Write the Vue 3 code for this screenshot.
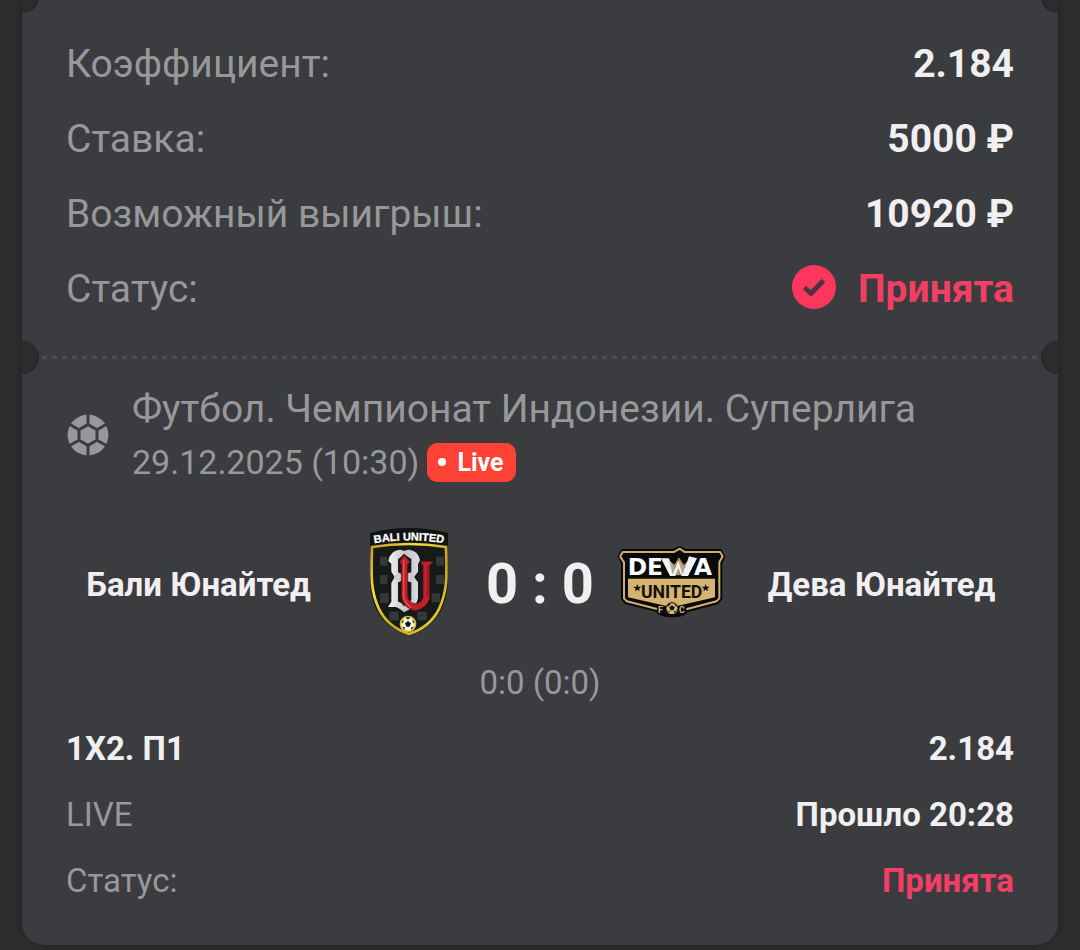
<script setup>
const summary = [
  { label: 'Коэффициент:', value: '2.184' },
  { label: 'Ставка:', value: '5000 ₽' },
  { label: 'Возможный выигрыш:', value: '10920 ₽' },
  { label: 'Статус:', value: 'Принята', accepted: true },
]
const details = [
  { label: '1X2. П1', value: '2.184', strong: true },
  { label: 'LIVE', value: 'Прошло 20:28' },
  { label: 'Статус:', value: 'Принята', accepted: true },
]
</script>

<template>
  <main class="page">
    <article class="ticket">
      <section class="summary">
        <span class="notch left top"></span>
        <span class="notch right top"></span>
        <dl class="rows">
          <div v-for="row in summary" :key="row.label" class="row">
            <dt>{{ row.label }}</dt>
            <dd :class="{ accepted: row.accepted }">
              <svg v-if="row.accepted" class="check" viewBox="0 0 44 44" aria-hidden="true">
                <circle cx="22" cy="22" r="22" fill="#ff375f" />
                <path d="M12.5 22.5 19 28.5 31.5 15.5" fill="none" stroke="#4b3440" stroke-width="4.8" />
              </svg>
              <span>{{ row.value }}</span>
            </dd>
          </div>
        </dl>
      </section>

      <div class="tear">
        <span class="notch left"></span>
        <span class="notch right"></span>
      </div>

      <section class="event">
        <header class="head">
          <svg class="ball" viewBox="-22 -22 44 44" aria-hidden="true">
            <circle r="20.4" fill="#98989a" />
            <g stroke="#3b3c3f" stroke-width="3" fill="none">
              <path d="M0-10.4 9-5.2V5.2L0 10.4-9 5.2V-5.2Z" />
              <path d="M0-10V-22M0 10V22M9-5.2 19.5-11.3M9 5.2 19.5 11.3M-9-5.2-19.5-11.3M-9 5.2-19.5 11.3" />
            </g>
          </svg>
          <div>
            <h1 class="league">Футбол. Чемпионат Индонезии. Суперлига</h1>
            <div class="when">
              <time datetime="2025-12-29T10:30">29.12.2025 (10:30)</time>
              <span class="live"><i class="dot"></i>Live</span>
            </div>
          </div>
        </header>

        <div class="match">
          <strong class="team">Бали Юнайтед</strong>
          <svg class="bali" viewBox="45 36 240 330" role="img" aria-label="Bali United">
            <defs>
              <linearGradient id="gold" x1="0" x2="1" y1="0" y2="1">
                <stop offset="0" stop-color="#c89a28" /><stop offset=".3" stop-color="#f5df3c" />
                <stop offset=".6" stop-color="#c9a027" /><stop offset="1" stop-color="#f4de35" />
              </linearGradient>
              <linearGradient id="silver" x1="0" x2="1">
                <stop offset="0" stop-color="#f2f2f4" /><stop offset=".55" stop-color="#c4c5c9" /><stop offset="1" stop-color="#dcdde0" />
              </linearGradient>
              <clipPath id="shield">
                <path d="M59 98Q165 74 271 98C275 190 275 230 252 278Q226 330 165 351Q104 330 78 278C55 230 55 190 59 98Z" />
              </clipPath>
            </defs>
            <path d="M48 54Q165 24 282 54L281 190C281 252 265 329 165 363C65 329 49 252 49 190Z" fill="#10130f" />
            <path d="M54 96Q165 78 276 96C279 190 279 230 256 280Q229 336 165 357Q101 336 74 280C51 230 51 190 54 96Z" fill="#171b18" stroke="url(#gold)" stroke-width="8" />
            <g clip-path="url(#shield)" fill="#34383a">
              <path d="M78 125H100V152H78ZM78 180H100V207H78ZM78 235H104V263H78ZM246 125H270V152H246ZM246 180H270V207H246ZM233 235H258V262H233ZM106 290H133V316H106ZM190 290H218V316H190Z" />
            </g>
            <path fill="url(#silver)" fill-rule="evenodd" d="M103 138Q108 108 136 104Q144 104 150 108Q158 104 166 104Q194 108 198 136L192 148V170L180 186 192 202V250Q190 274 150 292Q136 278 124 276H102L112 260V204L122 186 112 170V146ZM132 132V172Q143 175 150 186Q157 175 172 172V132Q162 126 150 116Q142 126 132 132ZM132 202V260Q144 262 150 274Q160 264 172 256V202Q157 199 150 188Q143 199 132 202Z" />
            <path d="M122 186Q136 172 150 186Q164 172 180 186M122 186Q136 200 150 186Q164 200 180 186" fill="none" stroke="#c9cacd" stroke-width="6" />
            <path fill="#c01f2b" stroke="#3a1216" stroke-width="2" d="M136 140 151 120 168 140 161 148V242Q164 264 184 266Q204 264 207 246V152L197 139H239L227 152V250Q220 278 185 288Q146 278 142 246V148Z" />
            <path d="M149 134V244Q153 266 172 278" fill="none" stroke="#e6525a" stroke-width="4" />
            <path d="M221 150V246" fill="none" stroke="#8c1720" stroke-width="4" />
            <g transform="translate(162 327)">
              <circle r="25" fill="#d7bf35" /><circle r="20" fill="#f5f4df" />
              <path d="M0-9 9-2 5 8H-5L-9-2ZM-7-20H7L0-13ZM14-14 20-3 14-5ZM18 8 9 18 10 10ZM-18 8-9 18-10 10ZM-14-14-20-3-14-5Z" fill="#171916" />
            </g>
            <path id="crest-arc" d="M54 86Q165 66 276 86" fill="none" />
            <text class="bali-name"><textPath href="#crest-arc" startOffset="50%" text-anchor="middle">BALI UNITED</textPath></text>
          </svg>
          <div class="score">0 : 0</div>
          <svg class="dewa" viewBox="36 48 327 216" role="img" aria-label="Dewa United FC">
            <path d="M38 78 51 57H202L224 48 244 57H348L361 78 352 101V208L340 222 248 247Q240 262 201 262Q161 261 153 245L60 222 48 208V101Z" fill="#080909" />
            <path d="M45 79 54 66H207L224 56 239 66H345L353 79 343 97V205L334 214 244 238M156 237 66 214 57 205V97L45 79" fill="none" stroke="#d3ad70" stroke-width="6" />
            <path d="M69 146H330V202L200 232 69 202Z" fill="#d6b372" />
            <path d="M196 136 196 94 208 104 222 82 236 104 248 94 250 136Z" fill="#b99152" />
            <g class="dewa-name"><text x="68" y="136">DE</text><text x="267" y="136">A</text></g>
            <path d="M168 85H191L209 119 220 92 239 117 252 79 276 85 249 138H230L220 115 211 138H195Z" fill="#f2f2f2" />
            <path d="M191 85 209 119 203 134ZM220 92 239 117 232 134Z" fill="#a9abae" />
            <text class="united-name" x="200" y="204" text-anchor="middle">UNITED</text>
            <path d="M97 162 100 170H109L102 176 104 184 97 179 90 184 92 176 85 170H94ZM302 162 305 170H314L307 176 309 184 302 179 295 184 297 176 290 170H299Z" fill="#11110e" />
            <path d="M157 228H245L239 251Q200 267 163 251Z" fill="#090a0a" />
            <g class="fc-name"><text x="159" y="250">F</text><text x="222" y="250">C</text></g>
            <circle cx="201" cy="236" r="18" fill="#d8b779" stroke="#080909" stroke-width="3" />
            <path d="M201 226 209 232 206 241H196L193 232ZM187 225 193 220 197 223 189 230ZM208 220 217 228 211 229ZM186 242 193 247 195 243ZM216 242 207 250 208 243Z" fill="#15140f" />
          </svg>
          <strong class="team">Дева Юнайтед</strong>
        </div>
        <p class="periods">0:0 (0:0)</p>

        <dl class="rows small">
          <div v-for="row in details" :key="row.label" class="row">
            <dt :class="{ strong: row.strong }">{{ row.label }}</dt>
            <dd :class="{ accepted: row.accepted }">{{ row.value }}</dd>
          </div>
        </dl>
      </section>
    </article>
  </main>
</template>

<style>
body {
  background: #2c2d2f;
}
</style>

<style scoped>
.page {
  padding: 0 22px 5px;
  font-family: Roboto, "Noto Sans", sans-serif;
  color: #98989a;
}
.ticket {
  background: #3b3c3f;
  border-radius: 0 0 22px 22px;
  box-shadow: 0 0 8px rgba(0, 0, 0, 0.25);
}
.summary {
  position: relative;
  padding: 26px 44px 30px;
  overflow: hidden;
}
.rows {
  margin: 0;
}
.row {
  display: flex;
  align-items: center;
  justify-content: space-between;
  height: 75px;
  font-size: 39px;
}
dd {
  display: flex;
  align-items: center;
  gap: 22px;
  margin: 0;
  font-weight: 700;
  color: #f2eff1;
}
.accepted {
  color: #f43e63;
}
.strong {
  font-weight: 700;
  color: #f2eff1;
}
.check {
  width: 44px;
  height: 44px;
  margin-bottom: 4px;
}
.small .row {
  height: 66px;
  font-size: 33px;
}
.tear {
  position: relative;
  height: 3px;
  background: repeating-linear-gradient(90deg, #4c4d50 0 5px, transparent 5px 10px);
}
.notch {
  position: absolute;
  top: -15px;
  width: 17px;
  height: 33px;
  background: #2c2d2f;
}
.notch.top {
  top: -20px;
}
.notch.left {
  left: 0;
  border-radius: 0 17px 17px 0;
  box-shadow: inset -2px 0 3px rgba(0, 0, 0, 0.15);
}
.notch.right {
  right: 0;
  border-radius: 17px 0 0 17px;
  box-shadow: inset 2px 0 3px rgba(0, 0, 0, 0.15);
}
.event {
  padding: 23px 44px 32px;
}
.head {
  display: flex;
  align-items: center;
  gap: 22px;
}
.ball {
  flex: none;
  width: 44px;
  height: 44px;
}
.league {
  margin: 0;
  font-size: 39px;
  font-weight: 400;
  line-height: 54px;
}
.when {
  display: flex;
  align-items: center;
  gap: 8px;
  height: 52px;
  font-size: 34px;
}
.live {
  display: flex;
  align-items: center;
  gap: 11px;
  height: 39px;
  padding: 0 12px 0 11px;
  border-radius: 10px;
  background: #ff4136;
  color: #fff;
  font-size: 25px;
  font-weight: 700;
}
.dot {
  width: 8px;
  height: 8px;
  border-radius: 50%;
  background: #fff;
}
.match {
  display: grid;
  grid-template-columns: 1fr 156px 106px 156px 1fr;
  align-items: center;
  justify-items: center;
  height: 110px;
  margin-top: 39px;
}
.team,
.score {
  padding-top: 4px;
  font-weight: 700;
  color: #f2eff1;
  white-space: nowrap;
}
.team {
  font-size: 33px;
}
.score {
  font-size: 56px;
}
.bali {
  width: 80px;
  height: 110px;
}
.dewa {
  width: 109px;
  height: 72px;
}
.bali-name {
  font: 700 33px "Liberation Sans", sans-serif;
  fill: #fff;
  stroke: #fff;
  stroke-width: 1px;
}
.dewa-name {
  font: 700 70px "DejaVu Sans", sans-serif;
  fill: #fff;
}
.united-name {
  font: 700 53px Roboto, sans-serif;
  fill: #11110e;
}
.fc-name {
  font: 700 26px Roboto, sans-serif;
  fill: #d8b779;
}
.periods {
  margin: 28px 0 14px;
  text-align: center;
  font-size: 33px;
  line-height: 36px;
}
</style>
